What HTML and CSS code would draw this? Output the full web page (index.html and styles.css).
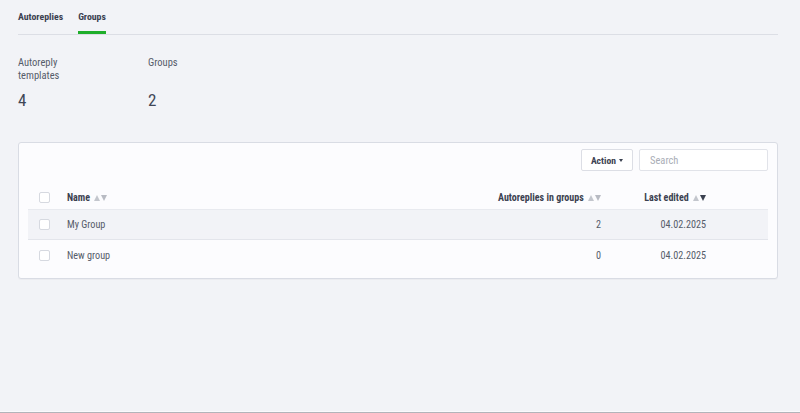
FILE: index.html
```html
<!DOCTYPE html>
<html lang="en">
<head>
  <meta charset="UTF-8">
  <meta name="viewport" content="width=device-width, initial-scale=1.0">
  <title>Groups</title>
  <link rel="stylesheet" href="styles.css">
</head>
<body>
  <div class="page">
    <nav class="tabs">
      <a href="#" class="tab">Autoreplies</a>
      <a href="#" class="tab active">Groups</a>
    </nav>

    <section class="stats">
      <div class="stat">
        <div class="stat-label">Autoreply templates</div>
        <div class="stat-value">4</div>
      </div>
      <div class="stat">
        <div class="stat-label">Groups</div>
        <div class="stat-value">2</div>
      </div>
    </section>

    <section class="card">
      <div class="toolbar">
        <button type="button" class="btn">Action <span class="caret"></span></button>
        <input type="text" class="search" placeholder="Search">
      </div>

      <div class="table">
        <div class="row head">
          <div class="cell"><span class="check"></span></div>
          <div class="cell">Name <span class="sort"><i class="up"></i><i class="down"></i></span></div>
          <div class="cell num">Autoreplies in groups <span class="sort"><i class="up"></i><i class="down"></i></span></div>
          <div class="cell num">Last edited <span class="sort"><i class="up"></i><i class="down on"></i></span></div>
          <div class="cell"></div>
        </div>
        <div class="row shaded">
          <div class="cell"><span class="check"></span></div>
          <div class="cell">My Group</div>
          <div class="cell num">2</div>
          <div class="cell num">04.02.2025</div>
          <div class="cell"></div>
        </div>
        <div class="row">
          <div class="cell"><span class="check"></span></div>
          <div class="cell">New group</div>
          <div class="cell num">0</div>
          <div class="cell num">04.02.2025</div>
          <div class="cell"></div>
        </div>
      </div>
    </section>
  </div>
  <div class="bottom-rule"></div>
</body>
</html>
```

FILE: styles.css
```css
:root {
  --bg: #f2f3f7;
  --card: #fcfcfe;
  --border: #d9dce4;
  --line: #e3e5eb;
  --text: #3b4150;
  --muted: #565c6a;
  --green: #1fae2a;
}

html, body {
  height: 100%;
}

body {
  margin: 0;
  display: flex;
  flex-direction: column;
  background: var(--bg);
  color: var(--text);
  font-family: 'Source Sans Pro', 'Roboto Condensed', Roboto, sans-serif;
  font-size: 10.5px;
}

.page {
  flex: 1;
  padding: 0 22px 0 18px;
}

/* Tabs */
.tabs {
  display: flex;
  gap: 15px;
  height: 34px;
  border-bottom: 1px solid #dcdee5;
}

.tab {
  display: flex;
  align-items: center;
  padding-top: 2px;
  color: var(--text);
  font-size: 9.8px;
  font-weight: 700;
  text-decoration: none;
  border-bottom: 3px solid transparent;
}

.tab.active {
  border-bottom-color: var(--green);
}

/* Stats */
.stats {
  display: flex;
  padding-top: 21px;
}

.stat {
  width: 130px;
}

.stat-label {
  width: 70px;
  height: 26px;
  line-height: 13px;
  color: var(--muted);
}

.stat-value {
  margin-top: 8px;
  font-size: 17px;
  line-height: 21px;
  color: #404656;
}

/* Card */
.card {
  margin-top: 31px;
  background: var(--card);
  border: 1px solid var(--border);
  border-radius: 3px;
  padding: 6px 9px 8px;
  box-shadow: 0 1px 1px rgba(0,0,0,0.03);
}

.toolbar {
  display: flex;
  justify-content: flex-end;
  gap: 6px;
}

.btn {
  height: 22px;
  width: 52px;
  padding: 0;
  background: #fff;
  border: 1px solid #dcdee5;
  border-radius: 2px;
  font-family: inherit;
  font-size: 9.6px;
  font-weight: 700;
  color: var(--text);
}

.caret {
  display: inline-block;
  margin-left: 1px;
  vertical-align: middle;
  border-top: 3px solid var(--text);
  border-left: 2.5px solid transparent;
  border-right: 2.5px solid transparent;
}

.search {
  box-sizing: border-box;
  height: 22px;
  width: 129px;
  padding: 0 10px;
  background: #fff;
  border: 1px solid #e1e3e9;
  border-radius: 2px;
  font-family: inherit;
  font-size: 10.5px;
  color: var(--text);
}

.search::placeholder {
  color: #a9adb6;
}

/* Table */
.table {
  margin-top: 15px;
}

.row {
  display: grid;
  grid-template-columns: 39px 1fr 200px 105px 62px;
  align-items: center;
  box-sizing: border-box;
  height: 30px;
  border-bottom: 1px solid var(--line);
  color: var(--muted);
  font-size: 10.2px;
}

.row:last-child {
  border-bottom: none;
}

.row.head {
  height: 24px;
  border-bottom-color: #e8eaef;
  color: var(--text);
  font-size: 10px;
  font-weight: 700;
}

.row.shaded {
  background: var(--bg);
}

.cell.num {
  text-align: right;
}

.check {
  display: block;
  box-sizing: border-box;
  width: 11px;
  height: 11px;
  margin-left: 11px;
  background: #fff;
  border: 1px solid #d6d9e0;
  border-radius: 2px;
}

/* Sort arrows drawn as small triangles */
.sort {
  display: inline-flex;
  gap: 1px;
  margin-left: 2px;
  vertical-align: 0;
}

.sort i {
  width: 0;
  height: 0;
  border-left: 3.5px solid transparent;
  border-right: 3.5px solid transparent;
}

.sort i.up {
  border-bottom: 6px solid #c3c6cd;
}

.sort i.down {
  border-top: 6px solid #b8bbc3;
}

.sort i.down.on {
  border-top-color: var(--text);
}

.bottom-rule {
  height: 1px;
  border-top: 1px solid #fafafc;
  background: #b2b4ba;
}
```
